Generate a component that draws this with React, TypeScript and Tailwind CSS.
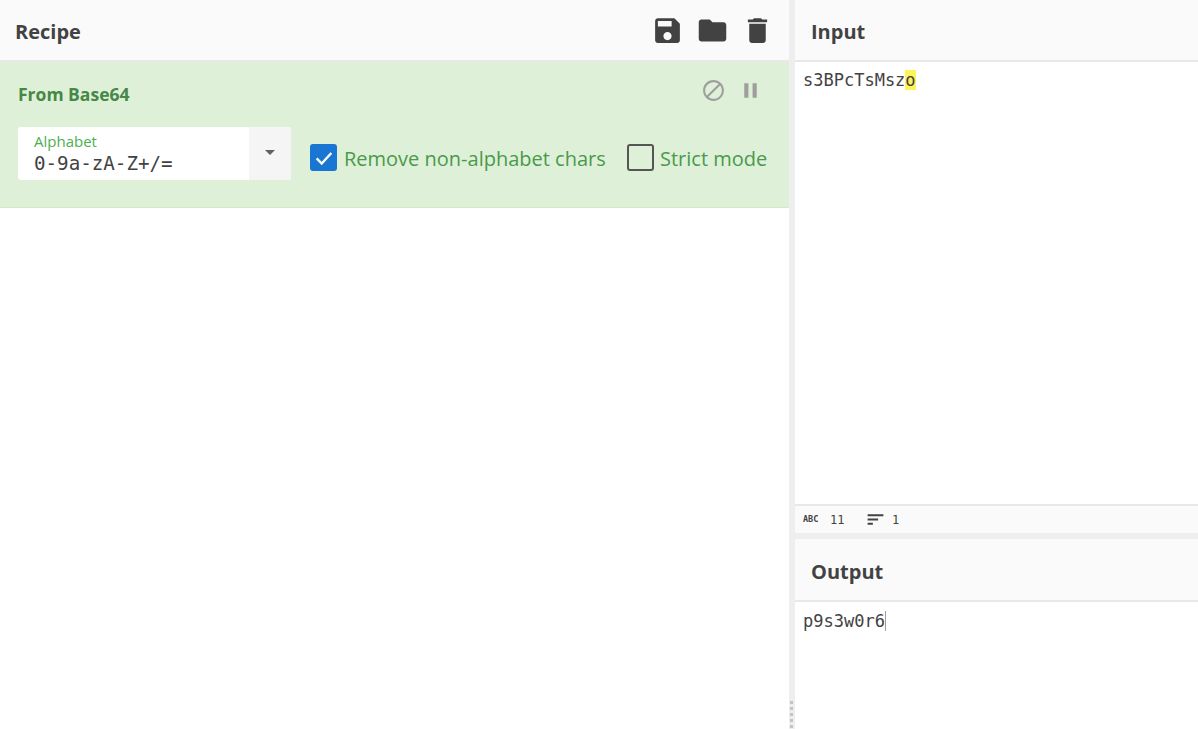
const SANS = "font-['Open_Sans','Noto_Sans',sans-serif]";
const Icon = ({ d, size, className }: { d: string; size: number; className?: string }) => (
  <svg width={size} height={size} viewBox="0 0 24 24" fill="currentColor" className={className}><path d={d} /></svg>
);
const save = "M17 3H5c-1.11 0-2 .9-2 2v14c0 1.1.89 2 2 2h14c1.1 0 2-.9 2-2V7l-4-4zm-5 16c-1.66 0-3-1.34-3-3s1.34-3 3-3 3 1.34 3 3-1.34 3-3 3zm3-10H5V5h10v4z";
const folder = "M10 4H4c-1.1 0-1.99.9-1.99 2L2 18c0 1.1.9 2 2 2h16c1.1 0 2-.9 2-2V8c0-1.1-.9-2-2-2h-8l-2-2z";
const trash = "M6 19c0 1.1.9 2 2 2h8c1.1 0 2-.9 2-2V7H6v12zM19 4h-3.5l-1-1h-5l-1 1H5v2h14V4z";
const block = "M12 2C6.48 2 2 6.48 2 12s4.48 10 10 10 10-4.48 10-10S17.52 2 12 2zM4 12c0-4.42 3.58-8 8-8 1.85 0 3.55.63 4.9 1.69L5.69 16.9C4.63 15.55 4 13.85 4 12zm8 8c-1.85 0-3.55-.63-4.9-1.69L18.31 7.1C19.37 8.45 20 10.15 20 12c0 4.42-3.58 8-8 8z";
const pause = "M6 19h4V5H6v14zm8-14v14h4V5h-4z";
const sort = "M3 18h6v-2.4H3v2.4zM3 6v2.4h18V6H3zm0 7.2h12v-2.4H3v2.4z";

export default function App() {
  return (
    <div className={`flex h-[729px] w-[1198px] overflow-hidden bg-white ${SANS}`}>
      <div className="flex w-[789px] shrink-0 flex-col">
        <div className="flex h-[62px] items-center justify-between border-b-2 border-[#e8e8e8] bg-[#fafafa] pl-[15px] pr-[15px] pt-[3px]">
          <span className="text-[20px] font-bold text-[#424242]">Recipe</span>
          <div className="-mt-[3px] flex items-center gap-[12px] text-[#424242]">
            <Icon d={save} size={33} />
            <Icon d={folder} size={33} />
            <Icon d={trash} size={33} />
          </div>
        </div>
        <div className="flex h-[146px] flex-col border-b border-[#d6e9c6] bg-[#dff0d8] pl-[18px] pr-[21px] pt-[14px]">
          <div className="flex h-[28px] items-center justify-between">
            <span className="mt-[8px] text-[17.5px] font-bold text-[#468847]">From Base64</span>
            <div className="flex items-center gap-[12px] pr-[5px] text-[#9e9e9e]">
              <Icon d={block} size={25} />
              <Icon d={pause} size={25} />
            </div>
          </div>
          <div className="mt-[23px] flex items-center whitespace-nowrap">
            <div className="flex h-[53px] w-[273px] shrink-0 overflow-hidden rounded-[3px] bg-white">
              <div className="flex flex-1 flex-col pl-[16px] pt-[5px]">
                <span className="text-[15px] leading-[18px] text-[#4caf50]">Alphabet</span>
                <span className="mt-[2px] font-['DejaVu_Sans_Mono',monospace] text-[19.2px] leading-[24px] text-[#424242]">0-9a-zA-Z+/=</span>
              </div>
              <div className="flex w-[42px] items-center justify-center bg-[#f5f5f5] pb-[2px]">
                <div className="h-0 w-0 border-x-[5px] border-t-[5px] border-x-transparent border-t-[#616161]" />
              </div>
            </div>
            <div className="ml-[19px] mt-[8px] flex h-[27px] w-[27px] shrink-0 items-center justify-center rounded-[3px] bg-[#1976d2]">
              <svg width="22" height="22" viewBox="0 0 24 24" fill="none" stroke="white" strokeWidth="2.6"><path d="M4 12.5l5.5 5.5L20 6.5" /></svg>
            </div>
            <span className="ml-[7px] mt-[10px] w-[262px] text-[20px] text-[#4a9a4c]">Remove non-alphabet chars</span>
            <div className="ml-[21px] mt-[8px] h-[27px] w-[27px] shrink-0 rounded-[3px] border-2 border-[#555555]" />
            <span className="ml-[6px] mt-[10px] text-[20px] text-[#4a9a4c]">Strict mode</span>
          </div>
        </div>
        <div className="flex-1 bg-white" />
      </div>

      <div className="flex w-[6px] shrink-0 flex-col justify-end bg-[#eeeeee]">
        <div className="mb-[1px] ml-[1px] flex w-[3px] flex-col gap-[3px]">
          {[0, 1, 2, 3, 4].map((i) => <div key={i} className="h-[3px] bg-[#c4c4c4]" />)}
        </div>
      </div>

      <div className="flex flex-1 flex-col">
        <div className="flex h-[62px] items-center border-b-2 border-[#e8e8e8] bg-[#fafafa] pl-[16px] pt-[3px]">
          <span className="text-[20px] font-bold text-[#424242]">Input</span>
        </div>
        <div className="h-[442px] bg-white pl-[8px] pt-[6px] font-['DejaVu_Sans_Mono',monospace] text-[17px] leading-[24px] text-[#424242]">
          s3BPcTsMsz<span className="bg-[#fff35c]">o</span>
        </div>
        <div className="flex h-[29px] items-center border-t-2 border-[#e8e8e8] bg-[#fafafa] pl-[8px] font-['DejaVu_Sans_Mono',monospace] text-[12px] text-[#424242]">
          <span className="flex w-[62px] items-center"><span className="w-[27px] text-[8.5px] font-bold">ABC</span>11</span>
          <span className="flex items-center gap-[6px]"><Icon d={sort} size={21} />1</span>
        </div>
        <div className="h-[6px] bg-[#eeeeee]" />
        <div className="flex h-[63px] items-center border-b-2 border-[#e8e8e8] bg-[#fafafa] pl-[16px] pt-[5px]">
          <span className="text-[20px] font-bold text-[#424242]">Output</span>
        </div>
        <div className="flex-1 bg-white pl-[8px] pt-[7px] font-['DejaVu_Sans_Mono',monospace] text-[17px] leading-[24px] text-[#424242]">
          <span className="border-r border-[#9e9e9e]">p9s3w0r6</span>
        </div>
      </div>
    </div>
  );
}
